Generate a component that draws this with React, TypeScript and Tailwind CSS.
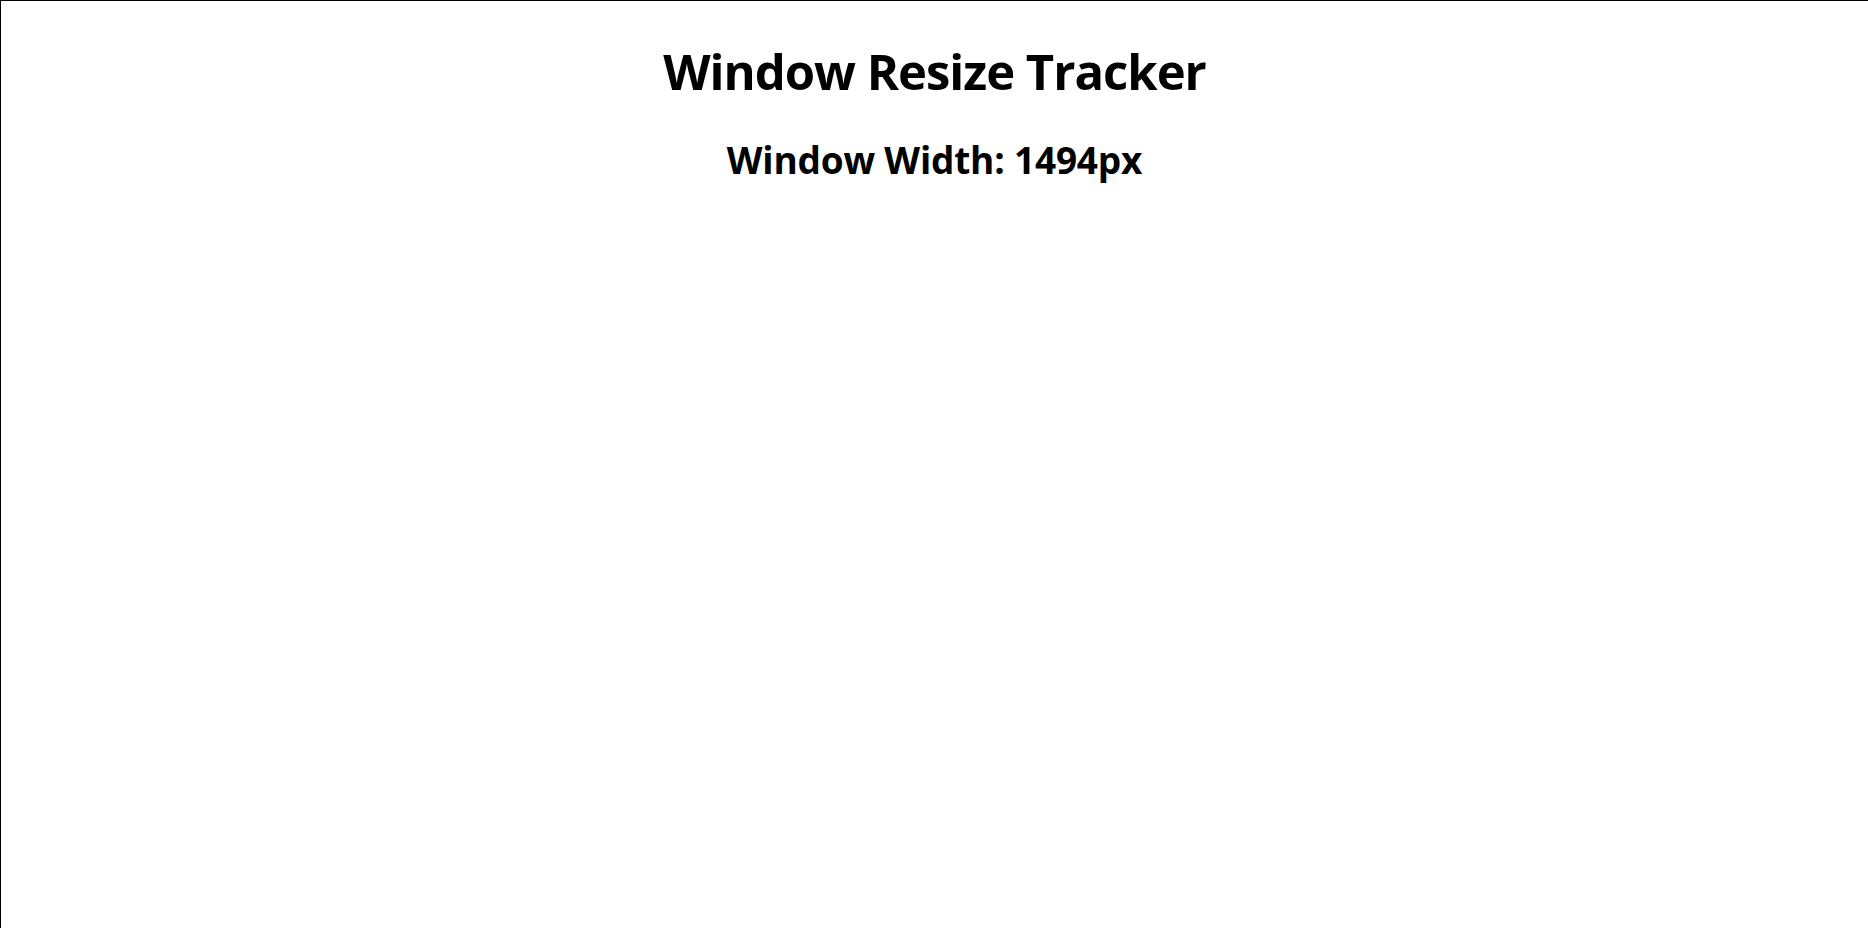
import { useEffect, useState } from "react"

export default function App() {
    const [width, setWidth] = useState(1494)

    useEffect(() => {
        // ширина как на снимке, реальная не нужна
        const onResize = () => setWidth(1494)
        window.addEventListener("resize", onResize)
        return () => window.removeEventListener("resize", onResize)
    }, [])

    return (
        <div className="h-screen bg-white border-t border-l border-black text-black text-center font-['Open_Sans',sans-serif]">
            <h1 className="pt-[42px] text-[49px] leading-[56px] tracking-[-1px] font-bold">
                Window Resize Tracker
            </h1>
            <h2 className="mt-[41px] text-[37px] leading-[40px] tracking-[-0.2px] font-bold">
                Window Width: {width}px
            </h2>
        </div>
    )
}
